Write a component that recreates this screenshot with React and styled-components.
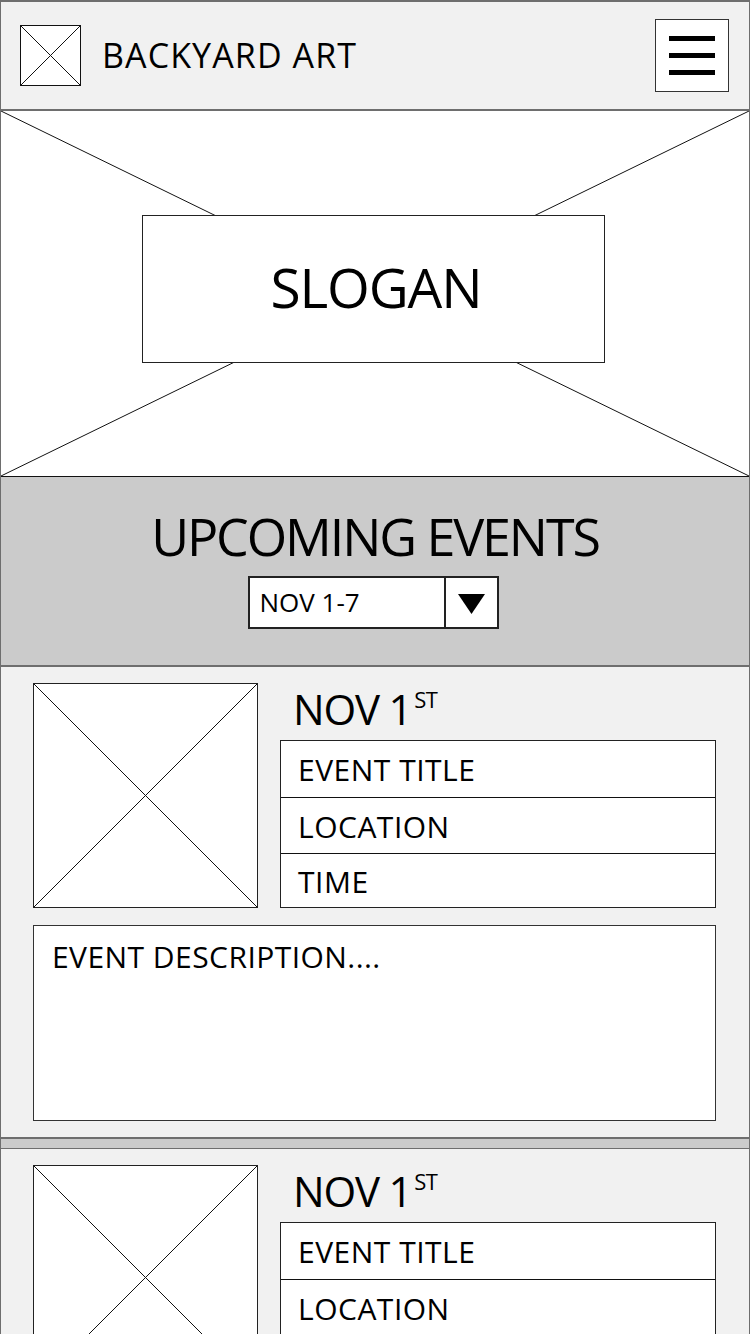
import React from "react";
import styled, { createGlobalStyle } from "styled-components";

const Global = createGlobalStyle`
  html, body { margin: 0; padding: 0; background: #ffffff; }
  body { font-family: "Open Sans", "Liberation Sans", sans-serif; color: #000; }
  * { box-sizing: border-box; }
`;

const Page = styled.div`
  width: 750px;
  border-left: 1px solid #6e6e6e;
  border-right: 1px solid #6e6e6e;
  overflow: hidden;
`;

const Header = styled.header`
  height: 111px;
  background: #f1f1f1;
  border-top: 2px solid #6e6e6e;
  border-bottom: 2px solid #6e6e6e;
  display: flex;
  align-items: center;
  padding: 0 20px 0 19px;
`;

const Brand = styled.div`
  display: flex;
  align-items: center;
  gap: 21px;
  flex: 1;
`;

const LogoBox = styled.div`
  width: 61px;
  height: 61px;
  border: 1.5px solid #111;
  background: #fff;
  display: flex;
  svg { display: block; width: 100%; height: 100%; }
`;

const BrandName = styled.h1`
  margin: 0;
  font-weight: 400;
  font-size: 34px;
  letter-spacing: 1.1px;
  line-height: 1;
  padding-bottom: 2px;
`;

const MenuButton = styled.button`
  width: 74px;
  height: 73px;
  border: 1.5px solid #333;
  background: #fff;
  padding: 0;
  display: flex;
  flex-direction: column;
  align-items: center;
  justify-content: center;
  gap: 12px;
`;

const MenuLine = styled.span`
  display: block;
  width: 46px;
  height: 5px;
  background: #000;
`;

const Hero = styled.section`
  height: 366px;
  background: #fff;
  border-bottom: 1px solid #111;
  display: grid;
  grid-template: 1fr / 1fr;
  svg { grid-area: 1 / 1; width: 100%; height: 100%; display: block; }
`;

const SloganBox = styled.div`
  grid-area: 1 / 1;
  justify-self: center;
  align-self: start;
  margin-top: 104px;
  margin-left: -4px;
  width: 463px;
  height: 148px;
  background: #fff;
  border: 1px solid #222;
  display: flex;
  align-items: center;
  justify-content: center;
  font-size: 55px;
  letter-spacing: -1.1px;
  line-height: 1;
  padding: 0 0 5px 6px;
  position: relative;
`;

const Upcoming = styled.section`
  background: #cbcbcb;
  height: 190px;
  border-bottom: 2px solid #6e6e6e;
  display: flex;
  flex-direction: column;
  align-items: center;
  padding-top: 33px;
`;

const UpcomingTitle = styled.h2`
  margin: 0;
  font-weight: 400;
  font-size: 52px;
  line-height: 1;
  letter-spacing: -2.1px;
`;

const Select = styled.div`
  margin-top: 14px;
  width: 251px;
  height: 53px;
  border: 2px solid #222;
  background: #fff;
  display: flex;
  margin-left: -4px;
`;

const SelectValue = styled.div`
  flex: 1;
  display: flex;
  align-items: center;
  padding-left: 10px;
  font-size: 26px;
  letter-spacing: 0;
  padding-bottom: 1px;
`;

const SelectArrow = styled.div`
  width: 53px;
  border-left: 2px solid #222;
  display: flex;
  align-items: center;
  justify-content: center;
  padding-top: 2px;
  svg { display: block; }
`;

const Card = styled.article`
  background: #f1f1f1;
  padding: 16px 33px 16px 32px;
  display: flex;
  flex-direction: column;
  gap: 17px;
`;

const Separator = styled.div`
  height: 12px;
  background: #cbcbcb;
  border-top: 2px solid #6e6e6e;
  border-bottom: 1px solid #6e6e6e;
`;

const CardTop = styled.div`
  display: flex;
  gap: 22px;
`;

const Thumb = styled.div`
  width: 225px;
  height: 225px;
  flex: none;
  border: 1px solid #222;
  background: #fff;
  svg { display: block; width: 100%; height: 100%; }
`;

const InfoColumn = styled.div`
  flex: 1;
  display: flex;
  flex-direction: column;
  justify-content: space-between;
`;

const DateLabel = styled.div`
  font-size: 42px;
  line-height: 1;
  letter-spacing: -1.2px;
  padding-left: 13px;
  padding-top: 5px;
`;

const Sup = styled.span`
  font-size: 22px;
  vertical-align: top;
  margin-left: 3px;
  letter-spacing: -0.5px;
`;

const InfoTable = styled.div`
  border: 1px solid #222;
  background: #fff;
  display: flex;
  flex-direction: column;
`;

const InfoRow = styled.div`
  height: 56px;
  display: flex;
  align-items: center;
  padding-left: 17px;
  padding-top: 1px;
  font-size: 30px;
  letter-spacing: 0.5px;
  border-top: ${(p) => (p.$first ? "none" : "1px solid #111")};
  &:last-child { height: 54px; }
`;

const Description = styled.div`
  height: 196px;
  border: 1px solid #333;
  background: #fff;
  padding: 13px 18px;
  font-size: 30px;
  line-height: 1.2;
  letter-spacing: 0.45px;
`;

const Cross = () => (
  <svg viewBox="0 0 100 100" preserveAspectRatio="none">
    <line x1="0" y1="0" x2="100" y2="100" stroke="#111" strokeWidth="1" vectorEffect="non-scaling-stroke" />
    <line x1="100" y1="0" x2="0" y2="100" stroke="#111" strokeWidth="1" vectorEffect="non-scaling-stroke" />
  </svg>
);

const EventCard = () => (
  <Card>
    <CardTop>
      <Thumb>
        <Cross />
      </Thumb>
      <InfoColumn>
        <DateLabel>
          NOV 1<Sup>ST</Sup>
        </DateLabel>
        <InfoTable>
          <InfoRow $first>EVENT TITLE</InfoRow>
          <InfoRow>LOCATION</InfoRow>
          <InfoRow>TIME</InfoRow>
        </InfoTable>
      </InfoColumn>
    </CardTop>
    <Description>EVENT DESCRIPTION....</Description>
  </Card>
);

export default function App() {
  return (
    <Page>
      <Global />
      <Header>
        <Brand>
          <LogoBox>
            <Cross />
          </LogoBox>
          <BrandName>BACKYARD ART</BrandName>
        </Brand>
        <MenuButton aria-label="Menu">
          <MenuLine />
          <MenuLine />
          <MenuLine />
        </MenuButton>
      </Header>
      <Hero>
        <Cross />
        <SloganBox>SLOGAN</SloganBox>
      </Hero>
      <Upcoming>
        <UpcomingTitle>UPCOMING EVENTS</UpcomingTitle>
        <Select>
          <SelectValue>NOV 1-7</SelectValue>
          <SelectArrow>
            <svg width="27" height="20" viewBox="0 0 27 20">
              <polygon points="0,0 27,0 13.5,20" fill="#000" />
            </svg>
          </SelectArrow>
        </Select>
      </Upcoming>
      <EventCard />
      <Separator />
      <EventCard />
    </Page>
  );
}
